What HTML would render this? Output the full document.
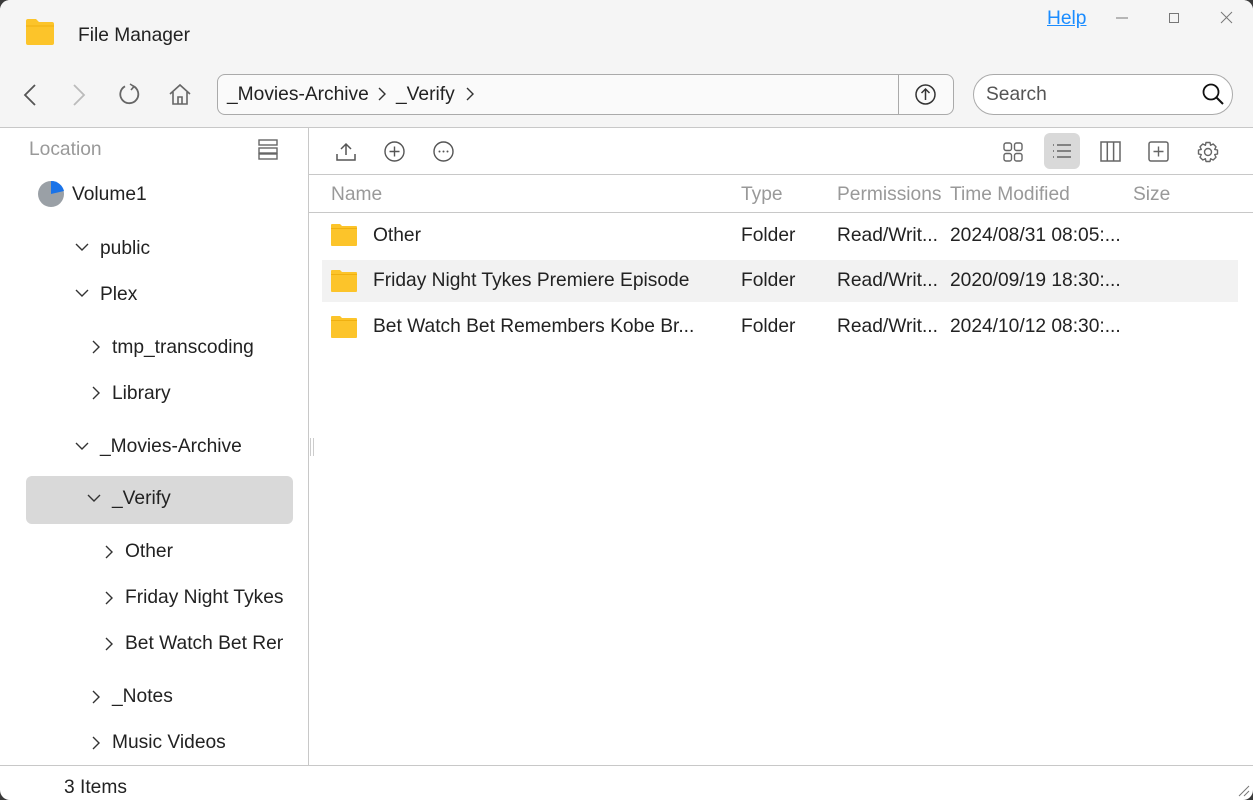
<!DOCTYPE html>
<html><head><meta charset="utf-8"><style>
*{margin:0;padding:0;box-sizing:border-box}
body{width:1253px;height:800px;background:#3a3a3a;font-family:"Liberation Sans",sans-serif;color:#222;overflow:hidden;position:relative}
.win{position:absolute;left:0;top:0;width:1253px;height:800px;background:#fff;border-radius:10px;overflow:hidden}
.a{position:absolute;white-space:nowrap}
.t{font-size:19.2px;line-height:22px;margin-top:1px}
svg{position:absolute;overflow:visible}
.g{color:#999}
</style></head><body><div class="win">
<div class="a" style="left:0;top:0;width:1253px;height:128px;background:#f5f5f5;border-bottom:1px solid #c8c8c8"></div>
<svg style="left:25px;top:19px" width="30" height="26"><path d="M1 2 Q1 0 3 0 H11 L14 3 H27 Q29 3 29 5 V24 Q29 26 27 26 H3 Q1 26 1 24Z" fill="#fcc42a"/><path d="M1 7 H29" stroke="#f0b010" stroke-width="1"/></svg>
<div class="a t" style="left:78px;top:24px">File Manager</div>
<div class="a t" style="left:1047px;top:7px;color:#1a8cff;text-decoration:underline">Help</div>
<svg style="left:1116px;top:17px" width="12" height="2"><path d="M0 1H12" stroke="#777"/></svg>
<svg style="left:1169px;top:13px" width="10" height="10"><rect x=".5" y=".5" width="9" height="9" fill="none" stroke="#777"/></svg>
<svg style="left:1221px;top:12px" width="11" height="11"><path d="M0 0L11 11M11 0L0 11" stroke="#777"/></svg>
<svg style="left:24px;top:84px" width="12" height="22"><path d="M11 1L1 11L11 21" fill="none" stroke="#555" stroke-width="1.8"/></svg>
<svg style="left:73px;top:84px" width="12" height="22"><path d="M1 1L11 11L1 21" fill="none" stroke="#bbb" stroke-width="1.8"/></svg>
<svg style="left:119px;top:84px" width="21" height="21"><path d="M14 2A9 9 0 1 1 6 2.3" fill="none" stroke="#666" stroke-width="1.8"/><path d="M11 0L15 2.5L12 6" fill="none" stroke="#666" stroke-width="1.6"/></svg>
<svg style="left:169px;top:84px" width="22" height="21"><path d="M1 10L11 1L21 10M4 8V20H18V8M9 20V13H13V20" fill="none" stroke="#666" stroke-width="1.6"/></svg>
<div class="a" style="left:217px;top:74px;width:737px;height:41px;border:1px solid #aaa;border-radius:8px;background:#fafafa"></div>
<div class="a" style="left:898px;top:74px;width:1px;height:41px;background:#aaa"></div>
<div class="a t" style="left:227px;top:83px">_Movies-Archive</div>
<svg style="left:378px;top:87px" width="8" height="14"><path d="M1 1L7 7L1 13" fill="none" stroke="#333" stroke-width="1.4"/></svg>
<div class="a t" style="left:396px;top:83px">_Verify</div>
<svg style="left:466px;top:87px" width="8" height="14"><path d="M1 1L7 7L1 13" fill="none" stroke="#333" stroke-width="1.4"/></svg>
<svg style="left:915px;top:84px" width="21" height="21"><circle cx="10.5" cy="10.5" r="9.5" fill="none" stroke="#333" stroke-width="1.5"/><path d="M10.5 16V5M6.5 9L10.5 5L14.5 9" fill="none" stroke="#333" stroke-width="1.5"/></svg>
<div class="a" style="left:973px;top:74px;width:260px;height:41px;border:1px solid #aaa;border-radius:21px;background:#fff"></div>
<div class="a t" style="left:986px;top:83px;color:#555">Search</div>
<svg style="left:1202px;top:83px" width="22" height="22"><circle cx="9" cy="9" r="7.5" fill="none" stroke="#111" stroke-width="1.8"/><path d="M14.5 14.5L21 21" stroke="#111" stroke-width="2"/></svg>
<div class="a" style="left:308px;top:128px;width:1px;height:637px;background:#c8c8c8"></div>
<div class="a t g" style="left:29px;top:138px">Location</div>
<svg style="left:258px;top:139px" width="20" height="21"><rect x="1" y="1" width="18" height="5" fill="none" stroke="#666" stroke-width="1.4"/><rect x="1" y="9" width="18" height="5" fill="none" stroke="#666" stroke-width="1.4"/><rect x="1" y="15" width="18" height="5" fill="none" stroke="#666" stroke-width="1.4"/></svg>
<svg style="left:37px;top:180px" width="28" height="28"><circle cx="14" cy="14" r="13" fill="#9aa0a6"/><path d="M14 14V1A13 13 0 0 1 27 11Z" fill="#1a73e8"/></svg>
<div class="a t" style="left:72px;top:183px">Volume1</div>
<div class="a" style="left:26px;top:476px;width:267px;height:48px;background:#d9d9d9;border-radius:6px"></div>
<div style="position:absolute;left:0;top:0;width:283px;height:765px;overflow:hidden">
<svg style="left:75px;top:243px" width="14" height="8"><path d="M1 1L7 7L13 1" fill="none" stroke="#333" stroke-width="1.4"/></svg>
<div class="a t" style="left:100px;top:237px">public</div>
<svg style="left:75px;top:289px" width="14" height="8"><path d="M1 1L7 7L13 1" fill="none" stroke="#333" stroke-width="1.4"/></svg>
<div class="a t" style="left:100px;top:283px">Plex</div>
<svg style="left:92px;top:340px" width="8" height="14"><path d="M1 1L7 7L1 13" fill="none" stroke="#333" stroke-width="1.4"/></svg>
<div class="a t" style="left:112px;top:336px">tmp_transcoding</div>
<svg style="left:92px;top:386px" width="8" height="14"><path d="M1 1L7 7L1 13" fill="none" stroke="#333" stroke-width="1.4"/></svg>
<div class="a t" style="left:112px;top:382px">Library</div>
<svg style="left:75px;top:442px" width="14" height="8"><path d="M1 1L7 7L13 1" fill="none" stroke="#333" stroke-width="1.4"/></svg>
<div class="a t" style="left:100px;top:435px">_Movies-Archive</div>
<svg style="left:87px;top:494px" width="14" height="8"><path d="M1 1L7 7L13 1" fill="none" stroke="#333" stroke-width="1.4"/></svg>
<div class="a t" style="left:112px;top:487px">_Verify</div>
<svg style="left:105px;top:545px" width="8" height="14"><path d="M1 1L7 7L1 13" fill="none" stroke="#333" stroke-width="1.4"/></svg>
<div class="a t" style="left:125px;top:540px">Other</div>
<svg style="left:105px;top:591px" width="8" height="14"><path d="M1 1L7 7L1 13" fill="none" stroke="#333" stroke-width="1.4"/></svg>
<div class="a t" style="left:125px;top:586px">Friday Night Tykes Premiere</div>
<svg style="left:105px;top:637px" width="8" height="14"><path d="M1 1L7 7L1 13" fill="none" stroke="#333" stroke-width="1.4"/></svg>
<div class="a t" style="left:125px;top:632px">Bet Watch Bet Remembers</div>
<svg style="left:92px;top:690px" width="8" height="14"><path d="M1 1L7 7L1 13" fill="none" stroke="#333" stroke-width="1.4"/></svg>
<div class="a t" style="left:112px;top:685px">_Notes</div>
<svg style="left:92px;top:736px" width="8" height="14"><path d="M1 1L7 7L1 13" fill="none" stroke="#333" stroke-width="1.4"/></svg>
<div class="a t" style="left:112px;top:731px">Music Videos</div>
</div>
<div class="a" style="left:310px;top:438px;width:4px;height:18px;border-left:1px solid #ccc;border-right:1px solid #ccc"></div>
<div class="a" style="left:309px;top:174px;width:944px;height:1px;background:#c8c8c8"></div>
<div class="a" style="left:309px;top:212px;width:944px;height:1px;background:#c8c8c8"></div>
<svg style="left:336px;top:142px" width="20" height="19"><path d="M10 13V2M5 7L10 2L15 7M1 12V18H19V12" fill="none" stroke="#555" stroke-width="1.5"/></svg>
<svg style="left:384px;top:141px" width="21" height="21"><circle cx="10.5" cy="10.5" r="9.5" fill="none" stroke="#555" stroke-width="1.4"/><path d="M10.5 5.5V15.5M5.5 10.5H15.5" stroke="#555" stroke-width="1.4"/></svg>
<svg style="left:433px;top:141px" width="21" height="21"><circle cx="10.5" cy="10.5" r="9.5" fill="none" stroke="#555" stroke-width="1.4"/><circle cx="6.5" cy="10.5" r="1" fill="#555"/><circle cx="10.5" cy="10.5" r="1" fill="#555"/><circle cx="14.5" cy="10.5" r="1" fill="#555"/></svg>
<svg style="left:1003px;top:142px" width="20" height="20"><rect x="1" y="1" width="7.5" height="7.5" rx="2" fill="none" stroke="#666" stroke-width="1.4"/><rect x="11.5" y="1" width="7.5" height="7.5" rx="2" fill="none" stroke="#666" stroke-width="1.4"/><rect x="1" y="11.5" width="7.5" height="7.5" rx="2" fill="none" stroke="#666" stroke-width="1.4"/><rect x="11.5" y="11.5" width="7.5" height="7.5" rx="2" fill="none" stroke="#666" stroke-width="1.4"/></svg>
<div class="a" style="left:1044px;top:133px;width:36px;height:36px;background:#d9d9d9;border-radius:6px"></div>
<svg style="left:1052px;top:144px" width="20" height="14"><path d="M1 1H2M1 7H2M1 13H2M5 1H19M5 7H19M5 13H19" stroke="#666" stroke-width="1.4"/></svg>
<svg style="left:1100px;top:141px" width="21" height="21"><rect x="1" y="1" width="19" height="19" fill="none" stroke="#666" stroke-width="1.5"/><path d="M7.3 1V20M13.6 1V20" stroke="#666" stroke-width="1.5"/></svg>
<svg style="left:1148px;top:141px" width="21" height="21"><rect x="1" y="1" width="19" height="19" rx="2" fill="none" stroke="#666" stroke-width="1.5"/><path d="M10.5 5.5V15.5M5.5 10.5H15.5" stroke="#666" stroke-width="1.4"/></svg>
<svg style="left:1197px;top:141px" width="22" height="22"><circle cx="11" cy="11" r="3.5" fill="none" stroke="#666" stroke-width="1.4"/><path d="M9 1.5H13L13.6 4.3L16.2 3L19 5.8L17.7 8.4L20.5 9V13L17.7 13.6L19 16.2L16.2 19L13.6 17.7L13 20.5H9L8.4 17.7L5.8 19L3 16.2L4.3 13.6L1.5 13V9L4.3 8.4L3 5.8L5.8 3L8.4 4.3Z" fill="none" stroke="#666" stroke-width="1.4" stroke-linejoin="round"/></svg>
<div class="a t g" style="left:331px;top:183px">Name</div>
<div class="a t g" style="left:741px;top:183px">Type</div>
<div class="a t g" style="left:837px;top:183px">Permissions</div>
<div class="a t g" style="left:950px;top:183px">Time Modified</div>
<div class="a t g" style="left:1133px;top:183px">Size</div>
<div class="a" style="left:322px;top:260px;width:916px;height:42px;background:#f2f2f2"></div>
<svg style="left:331px;top:224px" width="26" height="22"><path d="M0 1Q0 0 1 0H9L11 2H25Q26 2 26 3V21Q26 22 25 22H1Q0 22 0 21Z" fill="#fcc42a"/><path d="M0 4.5H26" stroke="#f0b010"/></svg>
<svg style="left:331px;top:270px" width="26" height="22"><path d="M0 1Q0 0 1 0H9L11 2H25Q26 2 26 3V21Q26 22 25 22H1Q0 22 0 21Z" fill="#fcc42a"/><path d="M0 4.5H26" stroke="#f0b010"/></svg>
<svg style="left:331px;top:316px" width="26" height="22"><path d="M0 1Q0 0 1 0H9L11 2H25Q26 2 26 3V21Q26 22 25 22H1Q0 22 0 21Z" fill="#fcc42a"/><path d="M0 4.5H26" stroke="#f0b010"/></svg>
<div class="a t" style="left:373px;top:224px">Other</div>
<div class="a t" style="left:741px;top:224px">Folder</div>
<div class="a t" style="left:837px;top:224px">Read/Writ...</div>
<div class="a t" style="left:950px;top:224px">2024/08/31 08:05:...</div>
<div class="a t" style="left:373px;top:269px">Friday Night Tykes Premiere Episode</div>
<div class="a t" style="left:741px;top:269px">Folder</div>
<div class="a t" style="left:837px;top:269px">Read/Writ...</div>
<div class="a t" style="left:950px;top:269px">2020/09/19 18:30:...</div>
<div class="a t" style="left:373px;top:315px">Bet Watch Bet Remembers Kobe Br...</div>
<div class="a t" style="left:741px;top:315px">Folder</div>
<div class="a t" style="left:837px;top:315px">Read/Writ...</div>
<div class="a t" style="left:950px;top:315px">2024/10/12 08:30:...</div>
<div class="a" style="left:0;top:765px;width:1253px;height:1px;background:#c8c8c8"></div>
<div class="a t" style="left:64px;top:776px">3 Items</div>
<svg style="left:1238px;top:785px" width="12" height="12"><path d="M11 1L1 11M11 6L6 11" stroke="#777"/></svg>
</div></body></html>
